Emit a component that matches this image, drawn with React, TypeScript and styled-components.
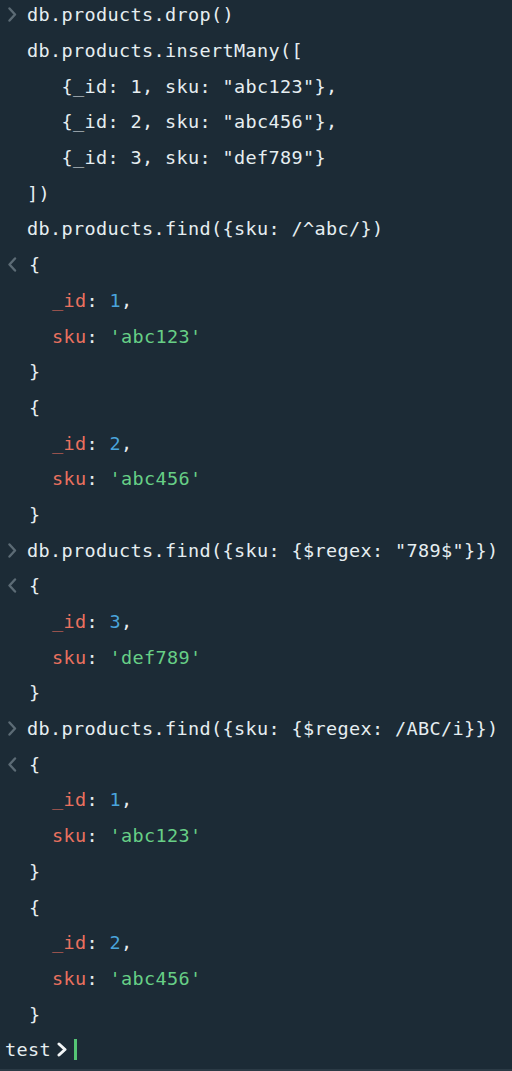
import React from "react";
import styled, { createGlobalStyle } from "styled-components";

const Global = createGlobalStyle`
  html, body { margin: 0; padding: 0; background: #1c2b36; }
  body { overflow: hidden; }
`;

const Shell = styled.div`
  width: 512px;
  height: 1071px;
  box-sizing: border-box;
  background: #1c2b36;
  border-bottom: 2px solid #2b3a45;
  overflow: hidden;
  font-family: "DejaVu Sans Mono", "Liberation Mono", monospace;
  font-size: 18.5px;
  letter-spacing: 0.36px;
  color: #e6eef1;
`;

const Lines = styled.div`
  display: flex;
  flex-direction: column;
  margin-top: -3px;
`;

const Row = styled.div<{ $shift?: boolean }>`
  display: flex;
  align-items: center;
  height: 35.7px;
  padding-left: 8px;
`;

const Gutter = styled.span<{ $shift?: boolean }>`
  width: ${(p) => (p.$shift ? 21 : 19)}px;
  flex: none;
  display: flex;
  align-items: center;
`;

const Code = styled.span`
  white-space: pre;
`;

const Key = styled.span`
  color: #ea715f;
`;
const Num = styled.span`
  color: #4aa4dc;
`;
const Str = styled.span`
  color: #67cf86;
`;

const PromptRow = styled.div`
  display: flex;
  align-items: center;
  height: 35.7px;
  padding-left: 5px;
`;

const PromptName = styled.span`
  white-space: pre;
`;

const PromptChevron = styled.span`
  display: flex;
  margin-left: 6px;
`;

const Cursor = styled.span`
  width: 3px;
  height: 21px;
  background: #54c474;
  margin-left: 7px;
`;

type Kind = "in" | "out" | "none";

const Chevron: React.FC<{ kind: Kind; shift?: boolean }> = ({ kind, shift }) => {
  if (kind === "none") return <Gutter $shift={shift} />;
  const d = kind === "in" ? "M1.5 1.5 L7 7.5 L1.5 13.5" : "M7 1.5 L1.5 7.5 L7 13.5";
  return (
    <Gutter $shift={shift}>
      <svg width="9" height="15" viewBox="0 0 9 15">
        <path d={d} fill="none" stroke="#5c6b75" strokeWidth="2.4" strokeLinecap="round" strokeLinejoin="round" />
      </svg>
    </Gutter>
  );
};

const Line: React.FC<{ kind?: Kind; out?: boolean; children: React.ReactNode }> = ({ kind = "none", out, children }) => (
  <Row>
    <Chevron kind={kind} shift={out} />
    <Code>{children}</Code>
  </Row>
);

const Doc: React.FC<{ id: number; sku: string; first?: boolean }> = ({ id, sku, first }) => (
  <>
    <Line out kind={first ? "out" : "none"}>{"{"}</Line>
    <Line out>
      {"  "}
      <Key>_id</Key>: <Num>{id}</Num>,
    </Line>
    <Line out>
      {"  "}
      <Key>sku</Key>: <Str>'{sku}'</Str>
    </Line>
    <Line out>{"}"}</Line>
  </>
);

export default function App() {
  return (
    <Shell>
      <Global />
      <Lines>
        <Line kind="in">db.products.drop()</Line>
        <Line>db.products.insertMany([</Line>
        <Line>{'   {_id: 1, sku: "abc123"},'}</Line>
        <Line>{'   {_id: 2, sku: "abc456"},'}</Line>
        <Line>{'   {_id: 3, sku: "def789"}'}</Line>
        <Line>{"])"}</Line>
        <Line>{"db.products.find({sku: /^abc/})"}</Line>
        <Doc id={1} sku="abc123" first />
        <Doc id={2} sku="abc456" />
        <Line kind="in">{'db.products.find({sku: {$regex: "789$"}})'}</Line>
        <Doc id={3} sku="def789" first />
        <Line kind="in">{"db.products.find({sku: {$regex: /ABC/i}})"}</Line>
        <Doc id={1} sku="abc123" first />
        <Doc id={2} sku="abc456" />
        <PromptRow>
          <PromptName>test</PromptName>
          <PromptChevron>
            <svg width="10" height="15" viewBox="0 0 10 15">
              <path d="M2 2 L8 7.5 L2 13" fill="none" stroke="#f2f5f6" strokeWidth="3" strokeLinecap="round" strokeLinejoin="round" />
            </svg>
          </PromptChevron>
          <Cursor />
        </PromptRow>
      </Lines>
    </Shell>
  );
}
